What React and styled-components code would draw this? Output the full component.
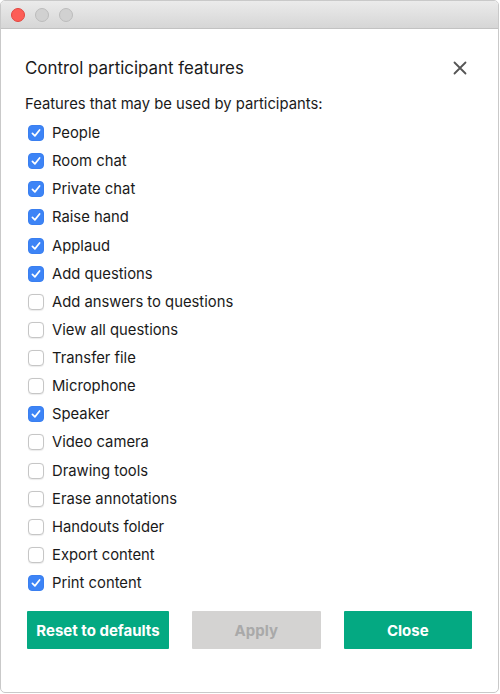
import React, { useState } from "react";
import styled, { createGlobalStyle } from "styled-components";

const Global = createGlobalStyle`
  html, body { margin: 0; padding: 0; background: #ffffff; }
  body { font-family: Inter, "Liberation Sans", Arial, sans-serif; }
  * { box-sizing: border-box; }
`;

const Window = styled.div`
  width: 499px;
  height: 693px;
  border: 1px solid #c9c9c9;
  border-radius: 5px;
  overflow: hidden;
  background: #ffffff;
  display: flex;
  flex-direction: column;
`;

const TitleBar = styled.div`
  height: 28px;
  flex: none;
  background: linear-gradient(#ebebeb, #d6d6d6);
  border-bottom: 1px solid #c2c2c2;
  display: flex;
  align-items: center;
  gap: 10px;
  padding-left: 10px;
`;

const Light = styled.span`
  width: 14px;
  height: 14px;
  border-radius: 50%;
  background: ${(p) => (p.$red ? "#fd5e57" : "#d1d1d1")};
  border: 1px solid ${(p) => (p.$red ? "#e2463f" : "#bcbcbc")};
`;

const Body = styled.div`
  padding: 21px 26px 0 24px;
  display: flex;
  flex-direction: column;
`;

const Header = styled.div`
  height: 36px;
  display: flex;
  align-items: center;
  justify-content: space-between;
`;

const Title = styled.h1`
  margin: 0;
  font-size: 16.9px;
  font-weight: 400;
  color: #1a1a1a;
`;

const CloseX = styled.button`
  border: none;
  background: none;
  padding: 0;
  margin-right: 4px;
  width: 16px;
  height: 16px;
  display: flex;
  cursor: pointer;
`;

const Subtitle = styled.div`
  margin-top: 4px;
  line-height: 28px;
  font-size: 14.8px;
  color: #1a1a1a;
`;

const List = styled.div`
  display: flex;
  flex-direction: column;
  padding: 1px 0 0 3px;
`;

const Row = styled.label`
  height: 28.125px;
  display: flex;
  align-items: center;
  gap: 8px;
  font-size: 14.8px;
  color: #1a1a1a;
  cursor: pointer;
`;

const Box = styled.span`
  width: 16px;
  height: 16px;
  border-radius: 4px;
  flex: none;
  display: flex;
  align-items: center;
  justify-content: center;
  background: ${(p) => (p.$on ? "#3d84f6" : "#ffffff")};
  border: 1px solid ${(p) => (p.$on ? "#3a7ff0" : "#c6c6c6")};
  box-shadow: ${(p) => (p.$on ? "none" : "0 0.5px 1px rgba(0,0,0,0.08)")};
`;

const Buttons = styled.div`
  margin-top: 14px;
  padding-left: 2px;
  display: grid;
  grid-template-columns: 142px 1fr 1fr;
  gap: 23px;
`;

const Btn = styled.button`
  height: 38px;
  border: none;
  border-radius: 1px;
  font-family: Inter, "Liberation Sans", Arial, sans-serif;
  font-size: 15px;
  font-weight: 700;
  color: ${(p) => (p.$disabled ? "#a9a9a9" : "#ffffff")};
  background: ${(p) => (p.$disabled ? "#d4d3d2" : "#04a982")};
  cursor: ${(p) => (p.$disabled ? "default" : "pointer")};
`;

const items = [
  ["People", true],
  ["Room chat", true],
  ["Private chat", true],
  ["Raise hand", true],
  ["Applaud", true],
  ["Add questions", true],
  ["Add answers to questions", false],
  ["View all questions", false],
  ["Transfer file", false],
  ["Microphone", false],
  ["Speaker", true],
  ["Video camera", false],
  ["Drawing tools", false],
  ["Erase annotations", false],
  ["Handouts folder", false],
  ["Export content", false],
  ["Print content", true],
];

function Check({ on }) {
  return (
    <Box $on={on}>
      {on && (
        <svg width="12" height="12" viewBox="0 0 12 12">
          <path d="M2.4 6.3 L4.9 8.9 L9.6 3" fill="none" stroke="#fff" strokeWidth="1.7" strokeLinecap="round" strokeLinejoin="round" />
        </svg>
      )}
    </Box>
  );
}

export default function App() {
  const [state, setState] = useState(items.map((i) => i[1]));
  return (
    <>
      <Global />
      <Window>
        <TitleBar>
          <Light $red />
          <Light />
          <Light />
        </TitleBar>
        <Body>
          <Header>
            <Title>Control participant features</Title>
            <CloseX aria-label="close">
              <svg width="16" height="16" viewBox="0 0 16 16">
                <path d="M2.5 2.5 L13.5 13.5 M13.5 2.5 L2.5 13.5" stroke="#555" strokeWidth="1.8" strokeLinecap="round" />
              </svg>
            </CloseX>
          </Header>
          <Subtitle>Features that may be used by participants:</Subtitle>
          <List>
            {items.map(([label], i) => (
              <Row key={label} onClick={() => setState((s) => s.map((v, j) => (j === i ? !v : v)))}>
                <Check on={state[i]} />
                {label}
              </Row>
            ))}
          </List>
          <Buttons>
            <Btn>Reset to defaults</Btn>
            <Btn $disabled>Apply</Btn>
            <Btn>Close</Btn>
          </Buttons>
        </Body>
      </Window>
    </>
  );
}
